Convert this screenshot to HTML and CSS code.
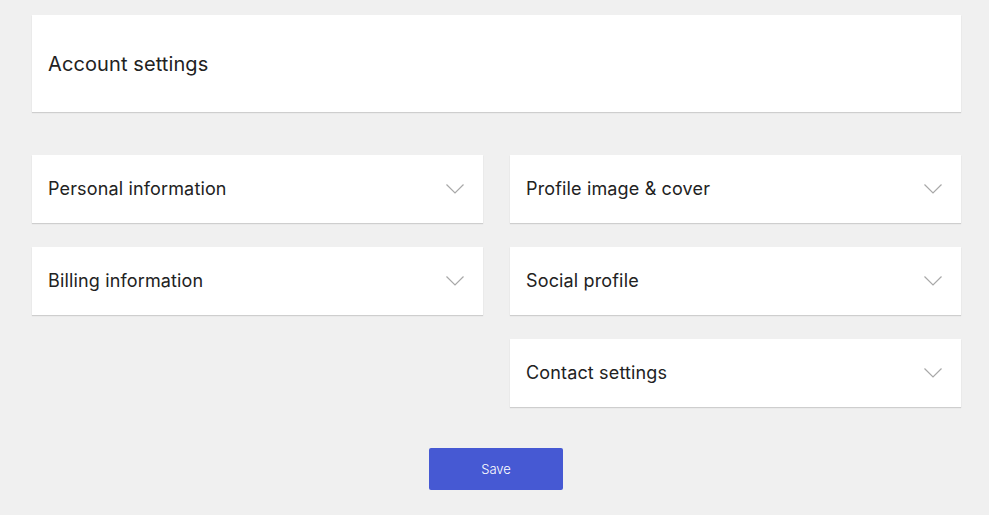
FILE: index.html
```html
<!DOCTYPE html>
<html>
<head>
<meta charset="utf-8">
<link rel="stylesheet" href="styles.css">
</head>
<body>
<div class="page">
  <div class="header card"><h1 class="title">Account settings</h1></div>
  <div class="grid">
    <div class="card acc"><span class="label">Personal information</span><svg class="chev" viewBox="0 0 18 10"><path d="M0.5 0.5 L9 9 L17.5 0.5"/></svg></div>
    <div class="card acc"><span class="label">Profile image &amp; cover</span><svg class="chev" viewBox="0 0 18 10"><path d="M0.5 0.5 L9 9 L17.5 0.5"/></svg></div>
    <div class="card acc"><span class="label">Billing information</span><svg class="chev" viewBox="0 0 18 10"><path d="M0.5 0.5 L9 9 L17.5 0.5"/></svg></div>
    <div class="card acc"><span class="label">Social profile</span><svg class="chev" viewBox="0 0 18 10"><path d="M0.5 0.5 L9 9 L17.5 0.5"/></svg></div>
    <div class="card acc col2"><span class="label">Contact settings</span><svg class="chev" viewBox="0 0 18 10"><path d="M0.5 0.5 L9 9 L17.5 0.5"/></svg></div>
  </div>
  <div class="actions"><button class="save">Save</button></div>
</div>
</body>
</html>
```
FILE: styles.css
```css
html, body { margin: 0; padding: 0; }
body {
  background: #f0f0f0;
  font-family: "Inter", "Noto Sans", sans-serif;
  color: #222;
}
.page {
  width: 929px;
  padding: 15px 0 0 32px;
}
.card {
  background: #fff;
  box-shadow: 0 1px 1px rgba(0,0,0,0.14);
}
.header {
  height: 97px;
  display: flex;
  align-items: center;
  padding-left: 16px;
}
.title {
  margin: 0;
  font-size: 20px;
  font-weight: 400;
  letter-spacing: 0.1px;
}
.grid {
  margin-top: 43px;
  display: grid;
  grid-template-columns: 451px 451px;
  column-gap: 27px;
  row-gap: 24px;
}
.acc {
  height: 68px;
  box-sizing: border-box;
  display: flex;
  align-items: center;
  justify-content: space-between;
  padding: 0 19px 2px 16px;
}
.col2 { grid-column: 2; }
.label { font-size: 18px; letter-spacing: 0.15px; }
.chev {
  width: 18px;
  height: 10px;
  fill: none;
  stroke: #a8a8a8;
  stroke-width: 1.2;
  margin-top: 2px;
}
.actions {
  margin-top: 41px;
  display: flex;
  justify-content: center;
  padding-right: 1px;
}
.save {
  width: 134px;
  height: 42px;
  background: #4659d3;
  color: #fff;
  border: none;
  border-radius: 2px;
  font-family: "Inter", sans-serif;
  font-size: 13px;
  font-weight: 300;
  cursor: pointer;
}
```
